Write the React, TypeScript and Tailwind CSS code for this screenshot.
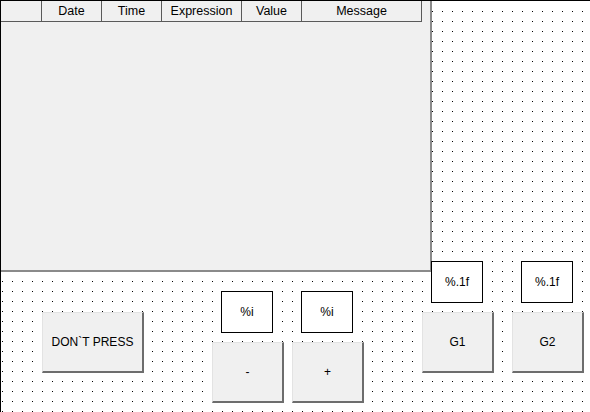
import React from "react";

const columns = [
	{ label: "", w: "w-[42px]" },
	{ label: "Date", w: "w-[60px]" },
	{ label: "Time", w: "w-[60px]" },
	{ label: "Expression", w: "w-[80px]" },
	{ label: "Value", w: "w-[60px]" },
	{ label: "Message", w: "w-[120px]" },
];

// controls on the designer canvas: their coordinates are the content
function Field({ x, y, text }: { x: number; y: number; text: string }) {
	return (
		<div
			className="absolute w-[52px] h-[42px] border border-black bg-white flex items-center justify-center text-[12px] text-black"
			style={{ left: x - 1, top: y - 1 }}
		>
			{text}
		</div>
	);
}

function Btn({ x, y, w, text }: { x: number; y: number; w: number; text: string }) {
	return (
		<button
			className="absolute h-[61px] bg-[#f0f0f0] border-t border-l border-[#e3e3e3] border-r-2 border-b-2 border-r-[#6d6d6d] border-b-[#6d6d6d] flex items-center justify-center text-[12px] text-black"
			style={{ left: x - 1, top: y - 1, width: w }}
		>
			{text}
		</button>
	);
}

export default function App() {
	return (
		<div className="relative w-[590px] h-[412px] overflow-hidden bg-white border-t border-l border-black font-['Liberation_Sans',Arial,sans-serif]">
			<svg className="absolute left-0 right-0 top-[10px] bottom-0 w-full h-full" aria-hidden>
				<defs>
					<pattern id="dots" width="10" height="10" patternUnits="userSpaceOnUse">
						<rect x="1" y="0" width="1" height="1" fill="#000" />
					</pattern>
				</defs>
				<rect width="100%" height="100%" fill="url(#dots)" />
			</svg>

			{/* log table */}
			<div className="absolute left-[-1px] top-0 w-[432px] h-[271px] bg-[#f0f0f0] border-r-2 border-b-2 border-r-[#8a8a8a] border-b-[#8a8a8a]">
				<div className="flex h-[21px]">
					{columns.map((c, i) => (
						<div
							key={i}
							className={`${c.w} h-full border-r border-b border-[#5a5a5a] flex items-center justify-center text-[12.5px] text-black`}
						>
							{c.label}
						</div>
					))}
				</div>
			</div>

			<Btn x={42} y={312} w={102} text="DON`T PRESS" />
			<Field x={221} y={291} text="%i" />
			<Field x={301} y={291} text="%i" />
			<Btn x={212} y={342} w={72} text="-" />
			<Btn x={292} y={342} w={72} text="+" />
			<Field x={431} y={261} text="%.1f" />
			<Field x={521} y={261} text="%.1f" />
			<Btn x={422} y={312} w={72} text="G1" />
			<Btn x={512} y={312} w={72} text="G2" />
		</div>
	);
}
